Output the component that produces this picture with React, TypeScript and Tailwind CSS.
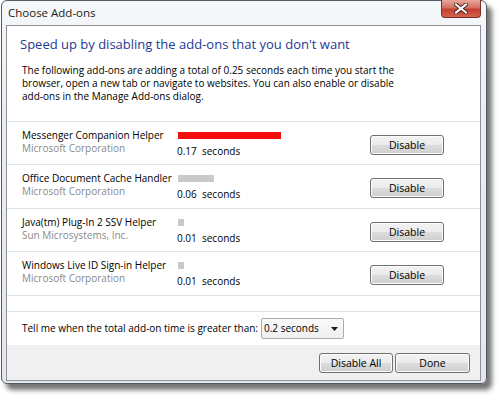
import React from 'react';

const addons = [
  { name: 'Messenger Companion Helper', company: 'Microsoft Corporation', time: '0.17', bar: 103, color: 'bg-[#f30d0d]' },
  { name: 'Office Document Cache Handler', company: 'Microsoft Corporation', time: '0.06', bar: 36, color: 'bg-[#c9c9c9]' },
  { name: 'Java(tm) Plug-In 2 SSV Helper', company: 'Sun Microsystems, Inc.', time: '0.01', bar: 6, color: 'bg-[#c9c9c9]' },
  { name: 'Windows Live ID Sign-in Helper', company: 'Microsoft Corporation', time: '0.01', bar: 6, color: 'bg-[#c9c9c9]' },
];

const WinButton: React.FC<{ label: string; className?: string }> = ({ label, className = '' }) => (
  <button
    className={`h-[20px] rounded-[3px] border border-[#707070] bg-[linear-gradient(to_bottom,#f2f2f2_0%,#ebebeb_50%,#dddddd_50%,#cfcfcf_100%)] text-[10.5px] leading-none text-black shadow-[inset_0_0_0_1px_#fcfcfc] ${className}`}
  >
    {label}
  </button>
);

const CloseButton: React.FC = () => (
  <div className="-mt-px flex h-[18px] w-[40px] items-center justify-center rounded-b-[4px] border border-t-0 border-[#7a2f26] bg-[linear-gradient(to_bottom,#e8a89c_0%,#d27060_45%,#c2412f_55%,#d5624a_100%)]">
    <svg width="14" height="11" viewBox="0 0 14 11">
      <path d="M2 1.5 L12 9.5 M12 1.5 L2 9.5" stroke="#4a2420" strokeWidth="4" strokeLinecap="square" />
      <path d="M2 1.5 L12 9.5 M12 1.5 L2 9.5" stroke="#ffffff" strokeWidth="2" strokeLinecap="square" />
    </svg>
  </div>
);

const App: React.FC = () => {
  return (
    <div className="relative h-[400px] w-[500px] overflow-hidden bg-white font-['Segoe_UI','Open_Sans',sans-serif] text-black">
      <div className="ml-[1px] flex h-[384px] w-[486px] flex-col rounded-[6px] border border-[#555a60] bg-[linear-gradient(to_bottom,#f6f8fa_0%,#e9edf1_30%,#e4e8ec_100%)] pb-[2px] pl-[4px] pr-[5px] shadow-[5px_6px_5px_rgba(0,0,0,0.55)]">
        {/* title bar */}
        <div className="flex h-[24px] shrink-0 items-start">
          <span className="mt-[5px] pl-[2px] text-[11.5px] leading-[14px] text-[#1a1a1a]">Choose Add-ons</span>
          <div className="ml-auto">
            <CloseButton />
          </div>
        </div>

        {/* client area */}
        <div className="flex flex-1 flex-col border border-[#8d9196] bg-white">
          <h1 className="mt-[10px] pl-[13px] text-[13px] leading-[17px] text-[#1f3a93]">
            Speed up by disabling the add-ons that you don't want
          </h1>
          <p className="mt-[11px] whitespace-nowrap pl-[15px] text-[10px] leading-[13px]">
            The following add-ons are adding a total of 0.25 seconds each time you start the
            <br />
            browser, open a new tab or navigate to websites. You can also enable or disable
            <br />
            add-ons in the Manage Add-ons dialog.
          </p>

          <div className="mt-[18px] border-b border-[#dce4ee]">
            {addons.map((a, i) => (
              <div key={a.name} className={`flex border-t border-[#dce4ee] pl-[15px] ${i % 2 ? 'h-[44px]' : 'h-[43px]'}`}>
                <div className="w-[156px] pt-[7px] text-[10px] leading-[13px]">
                  <div className="whitespace-nowrap">{a.name}</div>
                  <div className="text-[#8a8a8a]">{a.company}</div>
                </div>
                <div className="w-[192px]">
                  <div className={`mt-[10px] h-[7px] ${a.color}`} style={{ width: a.bar }} />
                  <div className="mt-[6px] -ml-px whitespace-pre text-[10px] leading-[13px]">{`${a.time}  seconds`}</div>
                </div>
                <WinButton label="Disable" className="mt-[13px] w-[74px]" />
              </div>
            ))}
          </div>

          <div className="mt-[15px] flex items-center border-t border-[#dce4ee] pl-[15px] pt-[6px] pb-[6px]">
            <span className="w-[239px] whitespace-nowrap text-[10px] leading-[13px]">Tell me when the total add-on time is greater than:</span>
            <div className="flex h-[21px] w-[83px] items-center justify-between rounded-[2px] border border-[#a5acb5] bg-[linear-gradient(to_bottom,#fafafa,#f0f0f0)] pl-[2px] pr-[5px] text-[10px]">
              <span>0.2 seconds</span>
              <svg width="7" height="4" viewBox="0 0 7 4">
                <path d="M0 0 H7 L3.5 4 Z" fill="#1a1a1a" />
              </svg>
            </div>
          </div>

          <div className="flex flex-1 items-start justify-end gap-[2px] bg-[#f0f0f0] pr-[10px] pt-[8px]">
            <WinButton label="Disable All" className="w-[74px]" />
            <WinButton label="Done" className="w-[75px]" />
          </div>
        </div>
      </div>
    </div>
  );
};

export default App;
